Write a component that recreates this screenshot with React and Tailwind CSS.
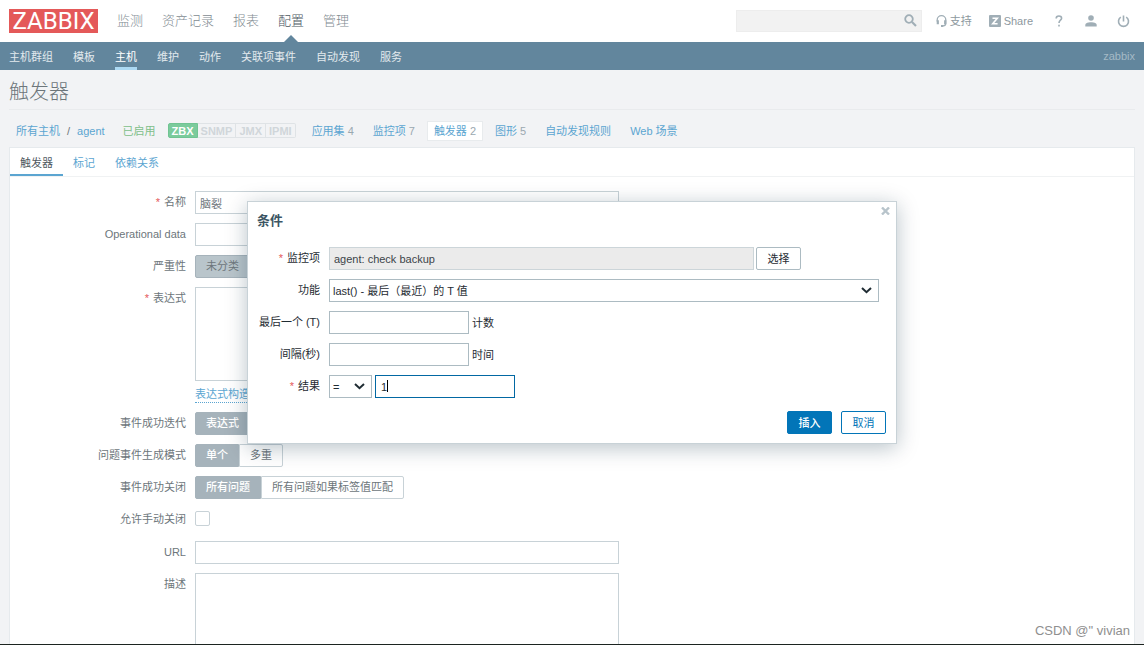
import { useState } from 'react';

const FIELD = "h-[23px] border border-[#c8d2d7] bg-white px-1 outline-none";
const DIALOG_FIELD = "h-[23px] border border-[#acbbc2] bg-white text-[#1f2c33] outline-none";
const ROW = "flex items-start gap-[9px]";
const LABEL = "w-[176px] shrink-0 text-right leading-[23px]";
const DIALOG_LABEL = "w-[63px] shrink-0 whitespace-nowrap text-right leading-[23px]";

const MENU = ['监测', '资产记录', '报表', '配置', '管理'];
const SUBMENU = ['主机群组', '模板', '主机', '维护', '动作', '关联项事件', '自动发现', '服务'];
const INTERFACES = ['ZBX', 'SNMP', 'JMX', 'IPMI'];
const HOST_LINKS = [
  { name: '应用集', count: 4 },
  { name: '监控项', count: 7 },
  { name: '触发器', count: 2 },
  { name: '图形', count: 5 },
  { name: '自动发现规则' },
  { name: 'Web 场景' },
];
const TABS = ['触发器', '标记', '依赖关系'];

const Star = () => <span className="mr-1 text-[#e45959]">*</span>;

const Chevron = () => (
  <svg className="pointer-events-none absolute right-[7px] top-2" width="11" height="7" viewBox="0 0 11 7" fill="none" stroke="#1f2c33" strokeWidth="2">
    <path d="M1 1L5.5 5.2L10 1" />
  </svg>
);

const RadioGroup = ({ name, options }) => {
  const [value, setValue] = useState(options[0]);
  return (
    <div className="flex">
      {options.map(o => (
        <label key={o}
          className={`flex h-[23px] items-center whitespace-nowrap border px-[10px] pb-px first:rounded-l-xs last:rounded-r-xs ${value === o ? 'border-[#a6b3bb] bg-[#a6b3bb] font-medium text-white' : 'border-[#c8d2d7] bg-white'}`}>
          <input type="radio" name={name} checked={value === o} onChange={() => setValue(o)} className="sr-only" />
          {o}
        </label>
      ))}
    </div>
  );
};

const Header = () => (
  <header>
    <div className="flex h-[42px] items-center bg-white pl-[9px] pr-[14px]">
      <a href="#" className="flex h-6 w-[89px] items-center justify-center bg-[#e45959] font-['Roboto'] text-[24px] leading-6 text-white">ZABBIX</a>
      <nav className="ml-[19px] flex h-full gap-[19px] text-[13px] font-light text-[#7f8b92]">
        {MENU.map(m => (
          <a key={m} href="#" className={`relative flex items-center ${m === '配置' ? 'text-[#4c585f]' : ''}`}>
            {m}
            {m === '配置' && (
              <svg className="absolute bottom-0 left-1/2 -translate-x-1/2" width="14" height="7" viewBox="0 0 14 7">
                <path d="M7 0L14 7H0Z" fill="#62869d" />
              </svg>
            )}
          </a>
        ))}
      </nav>
      <form className="relative ml-auto">
        <input type="text" aria-label="Search" className="block h-[22px] w-[186px] border border-[#ededed] bg-[#f2f2f2] px-1 outline-none" />
        <button type="button" aria-label="Search" className="absolute right-[5px] top-1">
          <svg width="13" height="13" viewBox="0 0 13 13" fill="none" stroke="#a0aeb6">
            <circle cx="5" cy="5" r="3.8" strokeWidth="1.8" />
            <path d="M8 8L12 12" strokeWidth="2.2" />
          </svg>
        </button>
      </form>
      <div className="flex items-center text-[#8d989e]">
        <a href="#" className="ml-[14px] flex items-center gap-[3px]">
          <svg width="11" height="12" viewBox="0 0 11 12" fill="none" stroke="#a0aeb6">
            <path d="M1.2 6.5V5a4.3 4.3 0 0 1 8.6 0v3.2c0 1.6-1 2.6-2.8 2.8" strokeWidth="1.3" />
            <path d="M1.8 5.2v4M9.2 5.2v4" strokeWidth="2.2" />
            <path d="M5 11h2" strokeWidth="1.8" />
          </svg>
          支持
        </a>
        <a href="#" className="ml-[17px] flex items-center gap-[3px]">
          <svg width="12" height="12" viewBox="0 0 12 12">
            <rect width="12" height="12" rx="1" fill="#a0aeb6" />
            <path d="M3.5 3.2H8.3L3.7 8.8H8.6" fill="none" stroke="#fff" strokeWidth="1.6" />
          </svg>
          Share
        </a>
        <a href="#" aria-label="Help" className="ml-[22px]">
          <svg width="8" height="12" viewBox="0 0 8 12" fill="none" stroke="#a0aeb6" strokeWidth="1.6">
            <path d="M1.2 3.4C1.2 0.2 6.6 0.2 6.6 3.2C6.6 5.2 4 5.2 4 8M4 9.8V11.6" />
          </svg>
        </a>
        <a href="#" aria-label="User profile" className="ml-[22px]">
          <svg width="12" height="12" viewBox="0 0 12 12" fill="#a0aeb6">
            <circle cx="6" cy="3" r="2.8" />
            <path d="M0.3 11.5V10C0.3 8 3 7.2 6 7.2S11.7 8 11.7 10V11.5Z" />
          </svg>
        </a>
        <button type="button" aria-label="Sign out" className="ml-5">
          <svg width="13" height="13" viewBox="0 0 13 13" fill="none" stroke="#a0aeb6" strokeWidth="1.6">
            <path d="M3.8 2.2A5 5 0 1 0 9.2 2.2M6.5 0.6V6.4" />
          </svg>
        </button>
      </div>
    </div>
    <nav className="flex h-7 gap-5 bg-[#62869d] px-[9px] text-[#e3eaee]">
      {SUBMENU.map(s => (
        <a key={s} href="#" className={`flex items-center border-b-3 pt-1 ${s === '主机' ? 'border-[#acd9f3] text-white' : 'border-transparent'}`}>{s}</a>
      ))}
      <span className="ml-auto flex items-center text-[#a5bac6]">zabbix</span>
    </nav>
  </header>
);

const HostBar = () => (
  <div className="flex h-[37px] items-center px-[7px] pt-1 text-[#5ba5d1]">
    <a href="#">所有主机</a>
    <span className="mx-[7px] text-[#6d767b]">/</span>
    <a href="#">agent</a>
    <span className="ml-[18px] text-[#80bf8a]">已启用</span>
    <div className="ml-3 flex">
      {INTERFACES.map(i => (
        <span key={i} className={`h-[15px] border border-l-0 px-[3px] font-bold leading-[14px] first:rounded-l-xs first:border-l last:rounded-r-xs ${i === 'ZBX' ? 'border-[#70c492] bg-[#7bcb9c] text-white' : 'border-[#dfe3e6] text-[#d0d6da]'}`}>{i}</span>
      ))}
    </div>
    <div className="ml-[9px] flex gap-[5px]">
      {HOST_LINKS.map(l => (
        <a key={l.name} href="#" className={`flex h-5 items-center gap-[3px] border px-[6px] ${l.name === '触发器' ? 'border-[#e8ebed] bg-white' : 'border-transparent'}`}>
          {l.name}
          {l.count && <span className="text-[#9aa8b0]">{l.count}</span>}
        </a>
      ))}
    </div>
  </div>
);

const TriggerForm = () => (
  <form className="flex flex-col gap-[9px] pt-[14px]">
    <div className={ROW}>
      <label htmlFor="name" className={LABEL}><Star />名称</label>
      <input id="name" type="text" defaultValue="脑裂" className={`${FIELD} w-[424px]`} />
    </div>
    <div className={ROW}>
      <label htmlFor="opdata" className={LABEL}>Operational data</label>
      <input id="opdata" type="text" className={`${FIELD} w-[424px]`} />
    </div>
    <div className={ROW}>
      <span className={LABEL}>严重性</span>
      <label className="flex h-[23px] items-center rounded-xs border border-[#a6b3bb] bg-[#b9c5cb] px-[10px] pb-px">
        <input type="radio" name="priority" defaultChecked className="sr-only" />
        未分类
      </label>
    </div>
    <div className={ROW}>
      <label htmlFor="expression" className={LABEL}><Star />表达式</label>
      <div>
        <textarea id="expression" className="block h-[94px] w-[424px] resize-none border border-[#c8d2d7] bg-white px-1 outline-none" />
        <button type="button" className="mt-1 block h-[18px] border-b border-dotted border-[#5ba5d1] leading-[18px] text-[#5ba5d1]">表达式构造器</button>
      </div>
    </div>
    <div className={ROW}>
      <span className={LABEL}>事件成功迭代</span>
      <RadioGroup name="recovery_mode" options={['表达式']} />
    </div>
    <div className={ROW}>
      <span className={LABEL}>问题事件生成模式</span>
      <RadioGroup name="type" options={['单个', '多重']} />
    </div>
    <div className={ROW}>
      <span className={LABEL}>事件成功关闭</span>
      <RadioGroup name="correlation_mode" options={['所有问题', '所有问题如果标签值匹配']} />
    </div>
    <div className={`${ROW} h-6`}>
      <label htmlFor="manual_close" className={LABEL}>允许手动关闭</label>
      <input id="manual_close" type="checkbox" className="mt-[3px] size-[15px] appearance-none rounded-xs border border-[#c8d2d7] bg-white" />
    </div>
    <div className={ROW}>
      <label htmlFor="url" className={LABEL}>URL</label>
      <input id="url" type="text" className={`${FIELD} w-[424px]`} />
    </div>
    <div className={ROW}>
      <label htmlFor="comments" className={LABEL}>描述</label>
      <textarea id="comments" className="block h-[94px] w-[424px] resize-none border border-[#c8d2d7] bg-white px-1 outline-none" />
    </div>
  </form>
);

const ConditionDialog = () => (
  <div role="dialog" aria-labelledby="dialog-title"
    className="absolute inset-x-0 top-[201px] mx-auto w-[650px] border border-[#c8d2d7] bg-white px-[9px] pb-[9px] text-[#1f2c33] shadow-[0_4px_20px_rgba(0,40,60,0.28)]">
    <button type="button" aria-label="Close" className="absolute right-[6px] top-[5px]">
      <svg width="9" height="8" viewBox="0 0 9 8" stroke="#b8c4cb" strokeWidth="2.4">
        <path d="M1 0.5L8 7.5M8 0.5L1 7.5" />
      </svg>
    </button>
    <h4 id="dialog-title" className="pt-[9px] text-[13px] font-bold leading-5 text-[#3c5563]">条件</h4>
    <form>
      <div className="mt-4 flex flex-col gap-[9px]">
        <div className={ROW}>
          <label htmlFor="item" className={DIALOG_LABEL}><Star />监控项</label>
          <div className="flex gap-[2px]">
            <input id="item" type="text" readOnly value="agent: check backup" className="h-[23px] w-[425px] border border-[#ccd5d9] bg-[#ebebeb] px-1 text-[#3c4449] outline-none" />
            <button type="button" className="h-[23px] w-[45px] rounded-xs border border-[#acbbc2]">选择</button>
          </div>
        </div>
        <div className={ROW}>
          <label htmlFor="function" className={DIALOG_LABEL}>功能</label>
          <div className="relative">
            <select id="function" className={`${DIALOG_FIELD} block w-[550px] appearance-none px-[3px]`}>
              <option>last() - 最后（最近）的 T 值</option>
            </select>
            <Chevron />
          </div>
        </div>
        <div className={ROW}>
          <label htmlFor="last" className={DIALOG_LABEL}>最后一个 (T)</label>
          <div className="flex items-center gap-[3px]">
            <input id="last" type="text" className={`${DIALOG_FIELD} w-[140px] px-1`} />
            计数
          </div>
        </div>
        <div className={ROW}>
          <label htmlFor="shift" className={DIALOG_LABEL}>间隔(秒)</label>
          <div className="flex items-center gap-[3px]">
            <input id="shift" type="text" className={`${DIALOG_FIELD} w-[140px] px-1`} />
            时间
          </div>
        </div>
        <div className={ROW}>
          <label htmlFor="result" className={DIALOG_LABEL}><Star />结果</label>
          <div className="flex gap-[3px]">
            <div className="relative">
              <select aria-label="Operator" className={`${DIALOG_FIELD} block w-[43px] appearance-none px-[3px]`}>
                <option>=</option>
              </select>
              <Chevron />
            </div>
            <div className="relative">
              <input id="result" type="text" defaultValue="1" className="block h-[23px] w-[140px] border border-[#0268a3] bg-white px-[5px] caret-transparent outline-none" />
              <span className="absolute left-3 top-[5px] h-3 w-px bg-black" />
            </div>
          </div>
        </div>
      </div>
      <div className="mt-[13px] flex justify-end gap-[9px] pr-px">
        <button type="button" className="h-[23px] w-[45px] rounded-xs border border-[#0275b8] bg-[#0275b8] font-medium text-white">插入</button>
        <button type="button" className="h-[23px] w-[45px] rounded-xs border border-[#0275b8] bg-white text-[#0275b8]">取消</button>
      </div>
    </form>
  </div>
);

const App = () => {
  const [tab, setTab] = useState('触发器');

  return (
    <div className="relative flex h-screen flex-col overflow-hidden border-b border-[#1c2420] bg-[#f2f3f5] font-['Liberation_Sans','Noto_Sans_CJK_SC',sans-serif] text-[11px] leading-4 text-[#6d767b]">
      <Header />
      <div className="mx-[9px] border-b border-[#e9ebed]">
        <h1 className="h-[39px] text-[20px] font-light leading-[45px]">触发器</h1>
      </div>
      <main className="mx-[9px] flex min-h-0 flex-1 flex-col">
        <HostBar />
        <div className="min-h-0 flex-1 overflow-hidden border border-b-0 border-[#e6eaed] bg-white">
          <div role="tablist" className="flex h-[29px] border-b border-[#f0f2f3]">
            {TABS.map(t => (
              <button key={t} type="button" role="tab" aria-selected={tab === t} onClick={() => setTab(t)}
                className={`border-b-2 px-[10px] pt-[3px] ${tab === t ? 'border-[#5ba5d1] text-[#4f595f]' : 'border-transparent text-[#5ba5d1]'}`}>{t}</button>
            ))}
          </div>
          <TriggerForm />
        </div>
      </main>
      <ConditionDialog />
      <span className="absolute bottom-[5px] right-[14px] text-[13px] leading-4 text-[#8f8f8f]">CSDN @" vivian</span>
    </div>
  );
};

export default App;
